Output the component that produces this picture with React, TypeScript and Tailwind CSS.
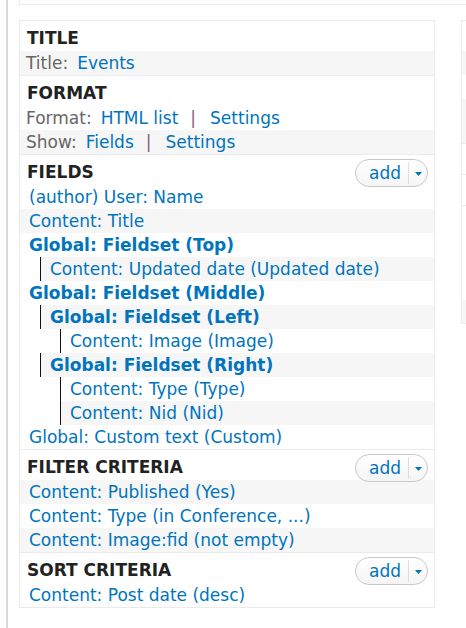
import { ReactNode } from "react";

type FieldRow = { label: string; depth?: 0 | 1 | 2; bold?: boolean };

const fieldRows: FieldRow[] = [
  { label: "(author) User: Name" },
  { label: "Content: Title" },
  { label: "Global: Fieldset (Top)", bold: true },
  { label: "Content: Updated date (Updated date)", depth: 1 },
  { label: "Global: Fieldset (Middle)", bold: true },
  { label: "Global: Fieldset (Left)", depth: 1, bold: true },
  { label: "Content: Image (Image)", depth: 2 },
  { label: "Global: Fieldset (Right)", depth: 1, bold: true },
  { label: "Content: Type (Type)", depth: 2 },
  { label: "Content: Nid (Nid)", depth: 2 },
  { label: "Global: Custom text (Custom)" },
];

const filterRows = [
  "Content: Published (Yes)",
  "Content: Type (in Conference, ...)",
  "Content: Image:fid (not empty)",
];

const depthClass = {
  0: "",
  1: "ml-[20px] border-l border-[#111]",
  2: "ml-[40px] border-l border-[#111]",
};

function AddButton() {
  return (
    <div className="mr-[6px] mt-[4px] flex h-[28px] w-[73px] shrink-0 items-center rounded-full border border-[#c9c9c9] bg-gradient-to-b from-white to-[#f5f5f5]">
      <span className="pl-[13px] pr-[7px] leading-[26px] text-[#0074bd]">add</span>
      <div className="h-[22px] w-px bg-[#dedede]" />
      <div className="flex flex-1 items-center justify-center pt-[2px]">
        <svg width="7" height="4" viewBox="0 0 7 4">
          <path d="M0 0h7L3.5 4z" fill="#0074bd" />
        </svg>
      </div>
    </div>
  );
}

function Section({ title, add, first, children }: { title: string; add?: boolean; first?: boolean; children: ReactNode }) {
  return (
    <div className={first ? "" : "border-t border-[#ebebeb]"}>
      <div className="flex h-[30px] items-start justify-between">
        <h3 className="pl-[7px] pt-[7px] text-[17px] font-bold leading-[20px] text-[#222]">{title}</h3>
        {add && <AddButton />}
      </div>
      {children}
    </div>
  );
}

function Row({ gray, depth = 0, children }: { gray?: boolean; depth?: 0 | 1 | 2; children: ReactNode }) {
  return (
    <div className={depthClass[depth]}>
      <div className={`h-[24px] whitespace-nowrap pl-[9px] pt-px leading-[23px] ${gray ? "bg-[#f6f6f6]" : ""}`}>{children}</div>
    </div>
  );
}

function SettingRow({ gray, label, children }: { gray?: boolean; label: string; children: ReactNode }) {
  return (
    <div className={`flex h-[24px] items-center whitespace-nowrap pl-[6px] pt-px leading-[23px] ${gray ? "bg-[#f6f6f6]" : ""}`}>
      <span className="mr-[9px] text-[#666]">{label}</span>
      {children}
    </div>
  );
}

const Pipe = () => <span className="ml-[12px] mr-[14px] text-[#875c82]">|</span>;

export default function App() {
  return (
    <div className="h-[628px] w-[466px] overflow-hidden bg-white pl-[6px] font-['DejaVu_Sans',sans-serif] text-[17px] text-[#0074bd]">
      <div className="flex h-full border-l-2 border-[#d9d9d9] pl-[11px]">
        <div className="flex min-w-0 flex-1 flex-col overflow-hidden">
          <div className="h-[5px] border-b border-l border-[#ebebeb]" />

          <div className="mt-[15px] flex items-start gap-[26px]">
            <div className="w-[416px] shrink-0 border border-[#ebebeb]">
              <Section title="TITLE" first>
                <SettingRow gray label="Title:">
                  <span>Events</span>
                </SettingRow>
              </Section>

              <Section title="FORMAT">
                <SettingRow label="Format:">
                  <span>HTML list</span>
                  <Pipe />
                  <span>Settings</span>
                </SettingRow>
                <SettingRow gray label="Show:">
                  <span>Fields</span>
                  <Pipe />
                  <span>Settings</span>
                </SettingRow>
              </Section>

              <Section title="FIELDS" add>
                {fieldRows.map((f, i) => (
                  <Row key={f.label} gray={i % 2 === 1} depth={f.depth}>
                    <span className={f.bold ? "font-bold" : ""}>{f.label}</span>
                  </Row>
                ))}
              </Section>

              <Section title="FILTER CRITERIA" add>
                {filterRows.map((f, i) => (
                  <Row key={f} gray={i % 2 === 0}>
                    {f}
                  </Row>
                ))}
              </Section>

              <Section title="SORT CRITERIA" add>
                <Row>Content: Post date (desc)</Row>
              </Section>
            </div>

            {/* next display column, mostly cut off */}
            <div className="w-[40px] shrink-0 border border-[#ebebeb]">
              <div className="h-[30px]" />
              <div className="h-[24px] bg-[#f6f6f6]" />
              <div className="h-[24px]" />
              <div className="h-[45px] border-b border-[#ebebeb] bg-[#f6f6f6]" />
              <div className="h-[31px] border-b border-[#ebebeb]" />
              <div className="h-[31px] border-b border-[#ebebeb]" />
              <div className="h-[94px]" />
              <div className="h-[23px] bg-[#f6f6f6]" />
            </div>
          </div>
        </div>
      </div>
    </div>
  );
}
